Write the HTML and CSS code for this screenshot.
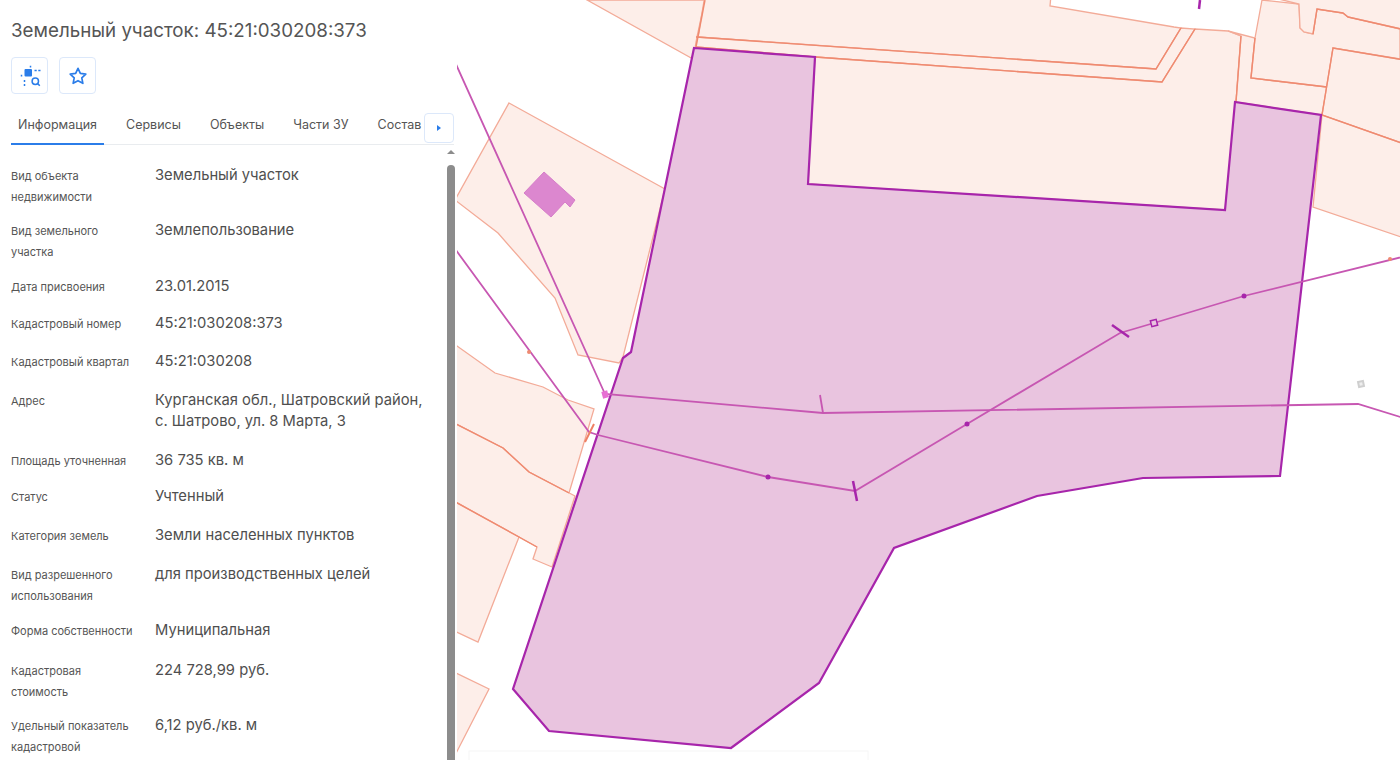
FILE: index.html
```html
<!DOCTYPE html>
<html lang="ru">
<head>
<meta charset="utf-8">
<title>Земельный участок</title>
<link rel="stylesheet" href="styles.css">
</head>
<body>
<div class="app">
  <aside class="panel">
    <h1 class="title">Земельный участок: 45:21:030208:373</h1>
    <div class="actions">
      <button class="icon-btn" type="button" aria-label="Показать на карте">
        <svg width="24" height="24" viewBox="0 0 24 24" class="btn-svg">
          <rect x="6.500" y="5" width="7.500" height="7.500" rx="1" class="i-fill"/>
          <path d="M12.500 1.800v1.600M16.500 6.500h2.200M20.300 6.500h2.200M3.500 10.800v1.600M6.500 16v2M6.500 20v2" class="i-stroke"/>
          <circle cx="17.300" cy="17.300" r="3.200" class="i-stroke"/>
          <path d="M19.600 19.600l2.200 2.200" class="i-stroke"/>
        </svg>
      </button>
      <button class="icon-btn" type="button" aria-label="В избранное">
        <svg width="20" height="20" viewBox="0 0 20 20">
          <path d="M10 2.300l2.350 5.050 5.450.7-4 3.800 1.050 5.450L10 14.650 5.150 17.300l1.050-5.450-4-3.800 5.450-.7z" class="i-star"/>
        </svg>
      </button>
    </div>
    <nav class="tabs">
      <a class="tab tab-active">Информация</a>
      <a class="tab">Сервисы</a>
      <a class="tab">Объекты</a>
      <a class="tab">Части ЗУ</a>
      <a class="tab">Состав</a>
      <button class="tab-next" type="button" aria-label="Далее"><span class="tab-arrow"></span></button>
    </nav>
    <div class="body">
      <dl class="props">
        <div class="row"><dt>Вид объекта недвижимости</dt><dd>Земельный участок</dd></div>
        <div class="row"><dt>Вид земельного участка</dt><dd>Землепользование</dd></div>
        <div class="row"><dt>Дата присвоения</dt><dd>23.01.2015</dd></div>
        <div class="row"><dt>Кадастровый номер</dt><dd>45:21:030208:373</dd></div>
        <div class="row"><dt>Кадастровый квартал</dt><dd>45:21:030208</dd></div>
        <div class="row"><dt>Адрес</dt><dd>Курганская обл., Шатровский район, с. Шатрово, ул. 8 Марта, 3</dd></div>
        <div class="row"><dt>Площадь уточненная</dt><dd>36 735 кв. м</dd></div>
        <div class="row"><dt>Статус</dt><dd>Учтенный</dd></div>
        <div class="row"><dt>Категория земель</dt><dd>Земли населенных пунктов</dd></div>
        <div class="row"><dt>Вид разрешенного использования</dt><dd>для производственных целей</dd></div>
        <div class="row"><dt>Форма собственности</dt><dd>Муниципальная</dd></div>
        <div class="row"><dt>Кадастровая стоимость</dt><dd>224 728,99 руб.</dd></div>
        <div class="row"><dt>Удельный показатель кадастровой стоимости</dt><dd>6,12 руб./кв. м</dd></div>
      </dl>
      <div class="scrollbar">
        <span class="scroll-up"></span>
        <span class="scroll-thumb"></span>
      </div>
    </div>
  </aside>
  <main class="map">
    <svg class="map-svg" viewBox="457 0 943 760" width="943" height="760" aria-label="Карта">
      <g class="parcel">
        <polygon points="587,0 693,59 697,37 705,0"/>
        <polygon points="705,-5 1051,-5 1050,6 1174,27 1181,28 1156,69 698,37"/>
        <polygon points="697,37 1156,69 1181,28 1195,29 1162,82 815,57 696,47"/>
        <polygon points="815,57 1162,82 1195,29 1228,31 1241,36 1236,102 1225,210 808,184"/>
        <polygon points="1241,36 1228,31 1255,38 1251,78 1327,87 1322,115 1236,102"/>
        <polygon points="1255,38 1262,0 1299,4 1300,28 1304,32 1313,34 1317,9 1343,13 1348,17 1400,29 1400,59 1333,48 1327,87 1251,78"/>
        <polygon points="1262,-5 1410,-5 1410,31 1348,17 1343,13 1317,9 1313,34 1304,32 1300,28 1299,4"/>
        <polygon points="1333,48 1410,61 1410,146 1322,115"/>
        <polygon points="1322,115 1410,146 1410,240 1313,207"/>
        <polygon points="509,103 665,189 623,357 619,363 578,355 555,298 498,233 455,200"/>
        <polygon points="450,341 495,373 543,387 568,400 594,409 569,493 529,472 503,448 450,421"/>
        <polygon points="450,421 503,448 529,472 575,496 552,567 533,559 537,547 450,499"/>
        <polygon points="450,499 519,537 478,642 450,629"/>
        <polygon points="450,670 489,689 450,765"/>
      </g>
      <g class="parcel-line">
        <polyline points="696,37 1156,69 1181,28"/>
        <polyline points="696,47 815,57 1162,82 1195,29"/>
        <polyline points="1241,36 1236,102"/>
        <polyline points="1255,38 1251,78 1327,87"/>
        <polyline points="1410,31 1348,17 1343,13 1317,9 1313,34"/>
        <polyline points="1410,61 1333,48 1322,115 1410,146"/>
        <polyline points="705,0 696,47"/>
        <polyline points="450,421 503,448 529,472 569,493"/>
        <polyline points="450,499 519,537 537,547"/>
      </g>
      <rect class="ghost-box" x="469" y="751" width="399" height="20"/>
      <polygon class="site" points="694,48 815,57 808,184 1225,210 1235,102 1321,115 1280,476 1143,478 1037,496 894,548 819,683 731,748 549,731 513,689 623,358 631,352"/>
      <polygon class="building" points="544,172 575,200 570,207 565,202 551,217 524,193"/>
      <g class="net">
        <polyline points="450,51 605,394 823,413 1358,404 1410,420"/>
        <polyline points="450,242 589,432 598,435 768,477 855,491 967,424 1120,333 1154,323 1244,296 1410,255"/>
        <polyline points="820,395 823,413"/>
      </g>
      <g class="net-tick">
        <polyline points="853,481 857,501"/>
        <polyline points="1112,325 1129,337"/>
        <polyline points="1200,0 1199,9"/>
      </g>
      <polyline class="orange-tick" points="594,424 585,442"/>
      <rect class="node-square" x="602" y="391" width="6" height="7" transform="rotate(-15 605 394)"/>
      <rect class="node-open" x="1151" y="320" width="6" height="6" transform="rotate(-15 1154 323)"/>
      <rect class="node-grey" x="1358.500" y="381.500" width="5" height="5" transform="rotate(-12 1361 384)"/>
      <circle class="node-dot" cx="768" cy="477" r="2.500"/>
      <circle class="node-dot" cx="967" cy="424" r="2.500"/>
      <circle class="node-dot" cx="1244" cy="296" r="2.500"/>
      <circle class="node-orange" cx="1390" cy="259" r="2"/>
      <circle class="node-orange" cx="529" cy="352" r="2"/>
    </svg>
  </main>
</div>
</body>
</html>
```

FILE: styles.css
```css
* { box-sizing: border-box; }
html, body { margin: 0; padding: 0; height: 760px; overflow: hidden; background: #fff; }
body { font-family: Inter, "Noto Sans", sans-serif; color: #4f4f4f; }
.app { display: flex; width: 1400px; height: 760px; }
.panel { width: 457px; flex: none; display: flex; flex-direction: column; padding-top: 20px; overflow: hidden; }
.title { margin: 0; padding-left: 11px; font-size: 18.750px; line-height: 22px; font-weight: 400; color: #555; white-space: nowrap; }
.actions { display: flex; gap: 11px; padding: 15px 0 0 11px; }
.icon-btn { width: 37px; height: 37px; padding: 0; display: flex; align-items: center; justify-content: center; background: #fff; border: 1.500px solid #dce8fa; border-radius: 4px; }
.i-fill { fill: #2b7de9; }
.i-stroke { fill: none; stroke: #2b7de9; stroke-width: 1.500; }
.i-star { fill: none; stroke: #2b7de9; stroke-width: 1.700; stroke-linejoin: round; }
.tabs { display: flex; align-items: stretch; height: 51px; margin: 0 3px 0 11px; padding-top: 19px; border-bottom: 1px solid #e9ecef; position: relative; font-size: 12.500px; color: #555; }
.tab { display: block; padding: 2px 7px 0; margin-right: 15px; line-height: 20px; white-space: nowrap; }
.tab-active { border-bottom: 2px solid #2b7de9; margin-bottom: -1px; }
.tab-next { position: absolute; right: 0; top: 19px; width: 30px; height: 30px; padding: 0; display: flex; align-items: center; justify-content: center; background: #fff; border: 1.500px solid #dce8fa; border-radius: 4px; }
.tab-arrow { width: 0; height: 0; border-left: 4px solid #2b7de9; border-top: 3.500px solid transparent; border-bottom: 3.500px solid transparent; }
.body { flex: 1; min-height: 0; display: flex; }
.props { margin: 0; flex: 1; padding: 21px 0 0 11px; min-width: 0; display: grid; grid-template-rows: 55px 56px 37px 38px 39px 60px 36px 39px 39px 56px 40px 55px auto; align-content: start; }
.row { display: grid; grid-template-columns: 144px 270px; align-items: start; }
.row dt { font-size: 11px; line-height: 21px; color: #555; padding-right: 18px; }
.row dd { margin: -1px 0 0; font-size: 14.750px; line-height: 21px; color: #4f4f4f; }
.scrollbar { width: 11px; flex: none; margin-right: 1px; display: flex; flex-direction: column; align-items: center; padding-top: 5px; }
.scroll-up { width: 0; height: 0; border-left: 4px solid transparent; border-right: 4px solid transparent; border-bottom: 4px solid #8c8c8c; margin-bottom: 11px; }
.scroll-thumb { flex: 1; width: 8px; background: #8c8c8c; border-radius: 4px 4px 0 0; }
.map { flex: 1; min-width: 0; background: #fff; }
.map-svg { display: block; }
.parcel polygon { fill: #fdeee9; stroke: #f3ab98; stroke-width: 1.300; }
.parcel-line polyline { fill: none; stroke: #ef8a70; stroke-width: 1.400; }
.ghost-box { fill: #fff; stroke: #f6f6f6; }
.site { fill: #e9c4df; stroke: #a725ab; stroke-width: 2.200; }
.building { fill: #dc87cf; stroke: #d67ec9; }
.net polyline { fill: none; stroke: #c757b2; stroke-width: 1.800; }
.net-tick polyline { fill: none; stroke: #a725ab; stroke-width: 2.500; }
.orange-tick { fill: none; stroke: #ee8063; stroke-width: 2; }
.node-square { fill: #e76fd3; }
.node-open { fill: #e9c4df; stroke: #a725ab; stroke-width: 1.500; }
.node-grey { fill: #eee; stroke: #cfcfcf; stroke-width: 2; }
.node-dot { fill: #a725ab; }
.node-orange { fill: #ee8a72; }
```
